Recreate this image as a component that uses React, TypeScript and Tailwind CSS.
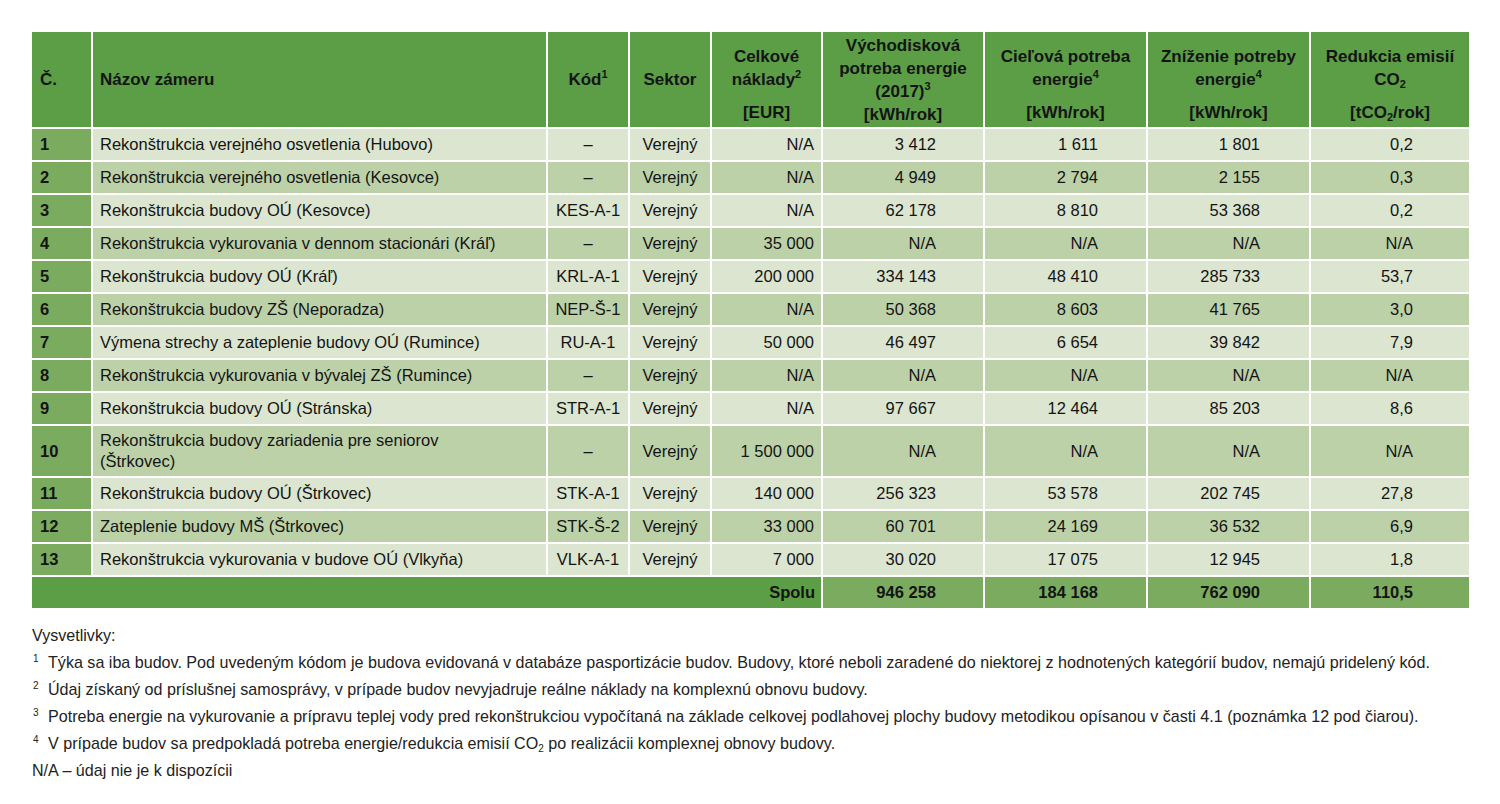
import React from "react";

type Row = [string, string, string, string, string, string, string, string, string];

const rows: Row[] = [
  ["1", "Rekonštrukcia verejného osvetlenia (Hubovo)", "–", "Verejný", "N/A", "3 412", "1 611", "1 801", "0,2"],
  ["2", "Rekonštrukcia verejného osvetlenia (Kesovce)", "–", "Verejný", "N/A", "4 949", "2 794", "2 155", "0,3"],
  ["3", "Rekonštrukcia budovy OÚ (Kesovce)", "KES-A-1", "Verejný", "N/A", "62 178", "8 810", "53 368", "0,2"],
  ["4", "Rekonštrukcia vykurovania v dennom stacionári (Kráľ)", "–", "Verejný", "35 000", "N/A", "N/A", "N/A", "N/A"],
  ["5", "Rekonštrukcia budovy OÚ (Kráľ)", "KRL-A-1", "Verejný", "200 000", "334 143", "48 410", "285 733", "53,7"],
  ["6", "Rekonštrukcia budovy ZŠ (Neporadza)", "NEP-Š-1", "Verejný", "N/A", "50 368", "8 603", "41 765", "3,0"],
  ["7", "Výmena strechy a zateplenie budovy OÚ (Rumince)", "RU-A-1", "Verejný", "50 000", "46 497", "6 654", "39 842", "7,9"],
  ["8", "Rekonštrukcia vykurovania v bývalej ZŠ (Rumince)", "–", "Verejný", "N/A", "N/A", "N/A", "N/A", "N/A"],
  ["9", "Rekonštrukcia budovy OÚ (Stránska)", "STR-A-1", "Verejný", "N/A", "97 667", "12 464", "85 203", "8,6"],
  ["10", "Rekonštrukcia budovy zariadenia pre seniorov|(Štrkovec)", "–", "Verejný", "1 500 000", "N/A", "N/A", "N/A", "N/A"],
  ["11", "Rekonštrukcia budovy OÚ (Štrkovec)", "STK-A-1", "Verejný", "140 000", "256 323", "53 578", "202 745", "27,8"],
  ["12", "Zateplenie budovy MŠ (Štrkovec)", "STK-Š-2", "Verejný", "33 000", "60 701", "24 169", "36 532", "6,9"],
  ["13", "Rekonštrukcia vykurovania v budove OÚ (Vlkyňa)", "VLK-A-1", "Verejný", "7 000", "30 020", "17 075", "12 945", "1,8"],
];

const nb = (s: string) => s.replace(/ /g, "\u00a0");

function UnitHeader({ top, unit }: { top: React.ReactNode; unit: React.ReactNode }) {
  return (
    <div className="bg-[#5b9e45] flex flex-col text-center font-bold text-[17px]">
      <div className="flex-1 flex flex-col justify-center leading-[23px] pt-[1px]">{top}</div>
      <div className="leading-[22px] pb-[3px]">{unit}</div>
    </div>
  );
}

const Sup = ({ c }: { c: string }) => <sup className="text-[11px] top-[-0.6em]">{c}</sup>;

export default function App() {
  return (
    <div
      className="w-[1500px] h-[804px] bg-white text-[#141414]"
      style={{ fontFamily: '"Liberation Sans", Arial, sans-serif' }}
    >
      <div className="pt-[32px] pl-[32px]">
        <div className="grid grid-cols-[59px_453px_80px_80px_109px_160px_161px_161px_158px] gap-[2px] bg-white text-[16.5px]">
          {/* header */}
          <div className="bg-[#5b9e45] h-[95px] flex items-center pl-[8px] font-bold text-[17px]">Č.</div>
          <div className="bg-[#5b9e45] flex items-center pl-[7px] font-bold text-[17px]">Názov zámeru</div>
          <div className="bg-[#5b9e45] flex items-center justify-center font-bold text-[17px]">
            <span>
              Kód<Sup c="1" />
            </span>
          </div>
          <div className="bg-[#5b9e45] flex items-center justify-center font-bold text-[17px]">Sektor</div>
          <UnitHeader
            top={
              <>
                <div>Celkové</div>
                <div>
                  náklady<Sup c="2" />
                </div>
              </>
            }
            unit={<span>[EUR]</span>}
          />
          <div className="bg-[#5b9e45] flex flex-col justify-center text-center font-bold text-[17px] leading-[23px]">
            <div>Východisková</div>
            <div>potreba energie</div>
            <div>
              (2017)<Sup c="3" />
            </div>
            <div>[kWh/rok]</div>
          </div>
          <UnitHeader
            top={
              <>
                <div>Cieľová potreba</div>
                <div>
                  energie<Sup c="4" />
                </div>
              </>
            }
            unit={<span>[kWh/rok]</span>}
          />
          <UnitHeader
            top={
              <>
                <div>Zníženie potreby</div>
                <div>
                  energie<Sup c="4" />
                </div>
              </>
            }
            unit={<span>[kWh/rok]</span>}
          />
          <UnitHeader
            top={
              <>
                <div>Redukcia emisií</div>
                <div>
                  CO<sub className="text-[11px] bottom-[-0.3em]">2</sub>
                </div>
              </>
            }
            unit={
              <span>
                [tCO<sub className="text-[11px] bottom-[-0.3em]">2</sub>/rok]
              </span>
            }
          />

          {/* body */}
          {rows.map((r, i) => {
            const bg = i % 2 === 0 ? "bg-[#dbe5cf]" : "bg-[#bcd1a8]";
            const h = r[0] === "10" ? "h-[50px]" : "h-[31px]";
            const nameParts = r[1].split("|");
            return (
              <React.Fragment key={r[0]}>
                <div className={`bg-[#7aab5f] ${h} flex items-center pl-[8px] font-bold`}>{r[0]}</div>
                <div className={`${bg} flex flex-col justify-center pl-[7px] leading-[21px]`}>
                  {nameParts.map((p) => (
                    <div key={p}>{p}</div>
                  ))}
                </div>
                <div className={`${bg} flex items-center justify-center`}>{nb(r[2])}</div>
                <div className={`${bg} flex items-center justify-center`}>{r[3]}</div>
                <div className={`${bg} flex items-center justify-end pr-[7px]`}>{nb(r[4])}</div>
                <div className={`${bg} flex items-center justify-end pr-[47px]`}>{nb(r[5])}</div>
                <div className={`${bg} flex items-center justify-end pr-[48px]`}>{nb(r[6])}</div>
                <div className={`${bg} flex items-center justify-end pr-[49px]`}>{nb(r[7])}</div>
                <div className={`${bg} flex items-center justify-end pr-[56px]`}>{nb(r[8])}</div>
              </React.Fragment>
            );
          })}

          {/* total */}
          <div className="col-span-5 bg-[#5b9e45] h-[31px] flex items-center justify-end pr-[6px] font-bold">Spolu</div>
          <div className="bg-[#7aab5f] flex items-center justify-end pr-[47px] font-bold">{nb("946 258")}</div>
          <div className="bg-[#7aab5f] flex items-center justify-end pr-[48px] font-bold">{nb("184 168")}</div>
          <div className="bg-[#7aab5f] flex items-center justify-end pr-[49px] font-bold">{nb("762 090")}</div>
          <div className="bg-[#7aab5f] flex items-center justify-end pr-[56px] font-bold">110,5</div>
        </div>

        {/* footnotes */}
        <div className="mt-[14px] text-[16.1px] leading-[27px] text-[#222]">
          <div>Vysvetlivky:</div>
          <Note n="1">
            Týka sa iba budov. Pod uvedeným kódom je budova evidovaná v databáze pasportizácie budov. Budovy, ktoré
            neboli zaradené do niektorej z hodnotených kategórií budov, nemajú pridelený kód.
          </Note>
          <Note n="2">
            Údaj získaný od príslušnej samosprávy, v prípade budov nevyjadruje reálne náklady na komplexnú obnovu
            budovy.
          </Note>
          <Note n="3">
            Potreba energie na vykurovanie a prípravu teplej vody pred rekonštrukciou vypočítaná na základe celkovej
            podlahovej plochy budovy metodikou opísanou v časti 4.1 (poznámka 12 pod čiarou).
          </Note>
          <Note n="4">
            V prípade budov sa predpokladá potreba energie/redukcia emisií CO
            <sub className="text-[10px] bottom-[-0.3em]">2</sub> po realizácii komplexnej obnovy budovy.
          </Note>
          <div>N/A – údaj nie je k dispozícii</div>
        </div>
      </div>
    </div>
  );
}

function Note({ n, children }: { n: string; children: React.ReactNode }) {
  return (
    <div className="flex whitespace-nowrap">
      <span className="w-[16px] shrink-0 text-[10px] leading-[20px] pl-[1px]">{n}</span>
      <span>{children}</span>
    </div>
  );
}
